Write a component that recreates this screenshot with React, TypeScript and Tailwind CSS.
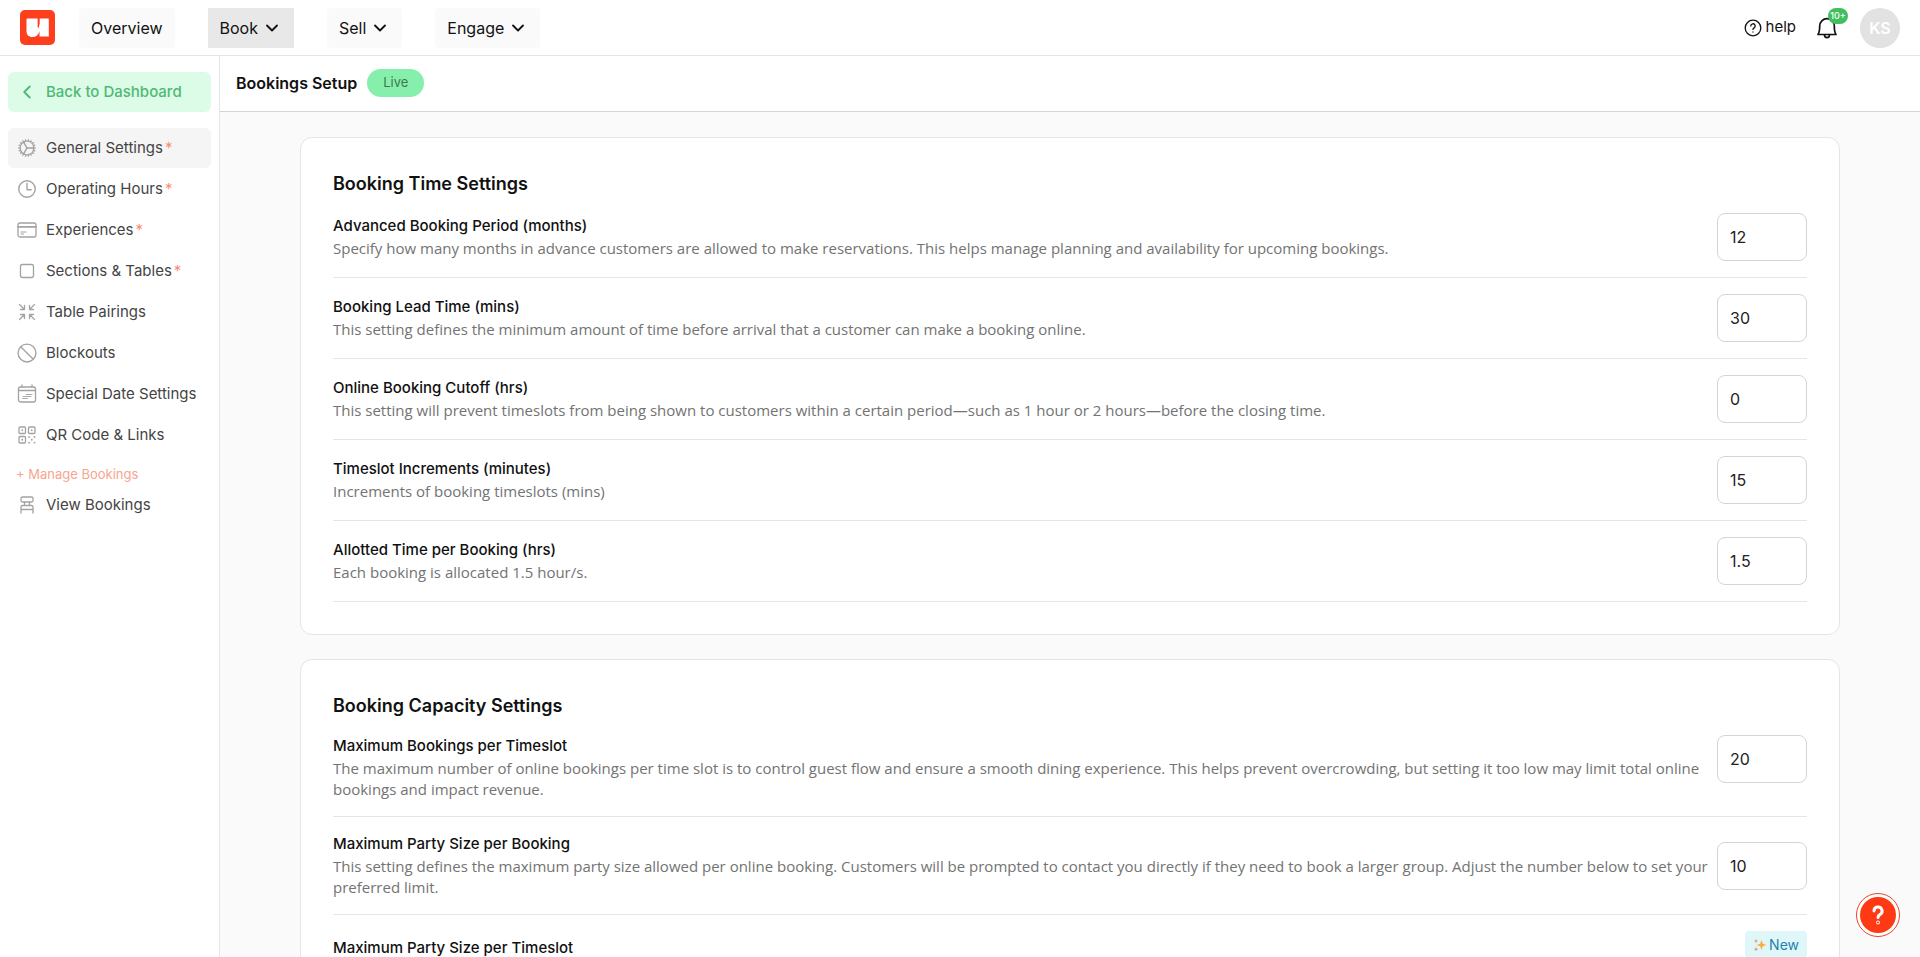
import { ReactNode } from "react";
import { IoCogOutline, IoTimeOutline, IoBanOutline } from "react-icons/io5";
import { ChevronDown, ChevronLeft } from "lucide-react";

const iconClass = "size-[22px] shrink-0 text-[#a3a3a3]";

function Stroke({ children }: { children: ReactNode }) {
  return (
    <svg viewBox="-1 -1 22 22" className={iconClass} fill="none" stroke="currentColor" strokeWidth="1.3" strokeLinecap="round" strokeLinejoin="round" aria-hidden="true">
      {children}
    </svg>
  );
}

type Item = { label: string; required?: boolean; active?: boolean; icon: ReactNode };

const items: Item[] = [
  { label: "General Settings", required: true, active: true, icon: <IoCogOutline className={iconClass} /> },
  { label: "Operating Hours", required: true, icon: <IoTimeOutline className={iconClass} /> },
  {
    label: "Experiences",
    required: true,
    icon: (
      <Stroke>
        <rect x="1" y="3" width="18" height="14" rx="2" />
        <path d="M1 6.800h18" strokeWidth="1.800" />
        <path d="M4 12h5M4 14h2.500" strokeWidth="1.200" />
      </Stroke>
    ),
  },
  { label: "Sections & Tables", required: true, icon: <Stroke><rect x="3.5" y="3.5" width="13" height="13" rx="2" /></Stroke> },
  {
    label: "Table Pairings",
    icon: (
      <Stroke>
        <path d="M2.5 2.5l5 5M7.5 3.5v4h-4M17.5 2.5l-5 5M12.5 3.5v4h4M2.5 17.5l5-5M3.5 12.5h4v4M17.5 17.5l-5-5M16.5 12.5h-4v4" />
      </Stroke>
    ),
  },
  { label: "Blockouts", icon: <IoBanOutline className={iconClass} /> },
  {
    label: "Special Date Settings",
    icon: (
      <Stroke>
        <rect x="1.5" y="3" width="17" height="15" rx="2" />
        <path d="M1.5 6.5h17M5 1v2M15 1v2" />
        <path d="M9 10.5h6M6 12.5h8M5.5 14.5h5" strokeWidth="0.9" />
      </Stroke>
    ),
  },
  {
    label: "QR Code & Links",
    icon: (
      <Stroke>
        <rect x="2" y="2" width="6.500" height="6.500" rx="1" />
        <rect x="11.500" y="2" width="6.500" height="6.500" rx="1" />
        <rect x="2" y="11.500" width="6.500" height="6.500" rx="1" />
        <path d="M5.250 5.250h.01M14.750 5.250h.01M5.250 14.750h.01M12 12h.01M17.500 12h.01M14.750 14.750h.01M12 17.700h.01M17.500 17.700h.01" strokeWidth="1.800" />
      </Stroke>
    ),
  },
];

function NavButton({ label, active = false, menu = true }: { label: string; active?: boolean; menu?: boolean }) {
  return (
    <button type="button" className={`flex h-10 items-center gap-1 px-3 text-base ${active ? "bg-[#e8e8e8]" : "rounded-sm bg-[#fafafa]"}`}>
      {label}
      {menu && <ChevronDown className="size-5" strokeWidth={2.2} aria-hidden="true" />}
    </button>
  );
}

function SideLink({ item }: { item: Item }) {
  return (
    <a href="#" className={`flex h-10 items-center gap-2 rounded-md px-2 text-[15px] text-[#444] ${item.active ? "bg-[#f5f5f5]" : ""}`}>
      {item.icon}
      <span className="flex gap-0.5 whitespace-nowrap">
        {item.label}
        {item.required && <span className="text-[#ff8a73]">*</span>}
      </span>
    </a>
  );
}

type Setting = { id: string; label: string; text: string; value: string; top?: boolean };

const timeSettings: Setting[] = [
  { id: "period", label: "Advanced Booking Period (months)", text: "Specify how many months in advance customers are allowed to make reservations. This helps manage planning and availability for upcoming bookings.", value: "12" },
  { id: "lead", label: "Booking Lead Time (mins)", text: "This setting defines the minimum amount of time before arrival that a customer can make a booking online.", value: "30" },
  { id: "cutoff", label: "Online Booking Cutoff (hrs)", text: "This setting will prevent timeslots from being shown to customers within a certain period—such as 1 hour or 2 hours—before the closing time.", value: "0" },
  { id: "increments", label: "Timeslot Increments (minutes)", text: "Increments of booking timeslots (mins)", value: "15" },
  { id: "allotted", label: "Allotted Time per Booking (hrs)", text: "Each booking is allocated 1.5 hour/s.", value: "1.5" },
];

const capacitySettings: Setting[] = [
  { id: "slot", label: "Maximum Bookings per Timeslot", text: "The maximum number of online bookings per time slot is to control guest flow and ensure a smooth dining experience. This helps prevent overcrowding, but setting it too low may limit total online bookings and impact revenue.", value: "20", top: true },
  { id: "party", label: "Maximum Party Size per Booking", text: "This setting defines the maximum party size allowed per online booking. Customers will be prompted to contact you directly if they need to book a larger group. Adjust the number below to set your preferred limit.", value: "10" },
];

function SettingRow({ s }: { s: Setting }) {
  return (
    <div className={`flex justify-between gap-2 border-b border-[#e5e5e5] pt-4 pb-4 first:pt-0 ${s.top ? "items-start" : "items-center"}`}>
      <div className="flex flex-col gap-0.5">
        <label htmlFor={s.id} className="text-[15px] leading-[21px] font-medium">{s.label}</label>
        <p className="font-['Open_Sans',sans-serif] text-[15px] leading-[21px] text-[#737373]">{s.text}</p>
      </div>
      <input id={s.id} defaultValue={s.value} className="h-12 w-[90px] shrink-0 rounded-lg border border-[#d4d4d4] bg-white px-3 text-base text-[#222]" />
    </div>
  );
}

function Card({ title, children }: { title: string; children: ReactNode }) {
  return (
    <section className="rounded-xl border border-[#e5e5e5] bg-white p-8">
      <h2 className="mb-4 text-lg leading-[27px] font-semibold">{title}</h2>
      <div>{children}</div>
    </section>
  );
}

export default function App() {
  return (
    <div className="flex h-screen flex-col overflow-hidden bg-white font-['Inter','Noto_Sans',sans-serif] text-[#111]">
      <header className="flex h-14 shrink-0 items-center justify-between border-b border-[#e5e5e5] px-5">
        <div className="flex items-center gap-6">
          <svg viewBox="0 0 35 35" className="size-[35px]" role="img" aria-label="Home">
            <rect width="35" height="35" rx="5" fill="#fd3f1d" />
            <path d="M6.500 9.500q0-1 1-1H17.600v8.500l.9 1.200 1.200-4.700V8.500h8.300q.8 0 .8 1V26.500H19.500v-5.500c-1.100 4-3.300 6-7 6-4 0-6-2.300-6-6z" fill="#fff" />
          </svg>
          <nav className="flex items-center gap-[33px]">
            <NavButton label="Overview" menu={false} />
            <NavButton label="Book" active />
            <NavButton label="Sell" />
            <NavButton label="Engage" />
          </nav>
        </div>
        <div className="flex items-center gap-5">
          <a href="#" className="flex items-center gap-1 text-[15px]">
            <svg viewBox="0 0 18 18" className="size-[18px]" fill="none" stroke="currentColor" strokeWidth="1.3" strokeLinecap="round" aria-hidden="true">
              <circle cx="9" cy="9" r="7.800" />
              <path d="M6.800 7a2.200 2.200 0 1 1 3.300 1.900c-.7.400-1.100.8-1.100 1.500M9 12.900v.1" />
            </svg>
            help
          </a>
          <button type="button" aria-label="Notifications" className="relative mr-0.5">
            <svg viewBox="0 0 22 24" className="h-6 w-[22px]" fill="none" stroke="currentColor" strokeWidth="1.700" strokeLinecap="round" strokeLinejoin="round" aria-hidden="true">
              <path d="M2 18.500h18c-1.500-2.200-1.700-3-1.700-8.500a7.300 7.300 0 0 0-14.600 0c0 5.500-.2 6.300-1.700 8.500zM8.500 19c0 3.500 5 3.500 5 0" />
            </svg>
            <span className="absolute -top-2 left-3 flex h-4 w-5 items-center justify-center rounded-full bg-[#3fbf5f] text-[9px] font-medium text-white">10+</span>
          </button>
          <button type="button" className="size-10 rounded-full bg-[#e2e2e2] text-base font-semibold text-white">KS</button>
        </div>
      </header>
      <div className="flex min-h-0 flex-1">
        <aside className="w-[220px] shrink-0 border-r border-[#e5e5e5] px-2 pt-4">
          <a href="#" className="mb-4 flex h-10 items-center gap-2 rounded-md bg-[#dcfce7] px-2 text-[15px] font-medium text-[#4fb974]">
            <ChevronLeft className="size-[22px]" aria-hidden="true" />
            Back to Dashboard
          </a>
          <nav className="flex flex-col gap-px">
            {items.map((item) => <SideLink key={item.label} item={item} />)}
          </nav>
          <p className="px-2 pt-2 text-[13px] leading-[22px] text-[#f9a48f]">+ Manage Bookings</p>
          <SideLink
            item={{
              label: "View Bookings",
              icon: (
                <Stroke>
                  <rect x="4" y="2" width="12" height="5" rx="1.500" />
                  <path d="M7.500 7v3.500M12.500 7v3.500M4 18v-6q0-1.500 1.500-1.500h9q1.500 0 1.500 1.500v6M4 14.500h12" />
                </Stroke>
              ),
            }}
          />
        </aside>
        <div className="flex min-w-0 flex-1 flex-col">
          <div className="flex h-14 shrink-0 items-center gap-2.5 border-b border-[#d4d4d4] px-4 pb-0.5">
            <h1 className="text-base font-semibold">Bookings Setup</h1>
            <span className="flex h-7 items-center rounded-full bg-[#86efac] px-4 text-[13px] text-[#3c7a52]">Live</span>
          </div>
          <main className="flex flex-1 flex-col gap-6 overflow-y-auto bg-[#fafafa] px-20 pt-[25px] [scrollbar-width:none]">
            <Card title="Booking Time Settings">
              {timeSettings.map((s) => <SettingRow key={s.id} s={s} />)}
            </Card>
            <Card title="Booking Capacity Settings">
              {capacitySettings.map((s) => <SettingRow key={s.id} s={s} />)}
              <div className="flex items-start justify-between pt-4">
                <h3 className="pt-1.5 text-[15px] leading-[21px] font-medium">Maximum Party Size per Timeslot</h3>
                <span className="flex h-7 items-center gap-0.5 rounded bg-[#e0f7fa] px-2 text-sm text-[#2583a8]">
                  <svg viewBox="0 0 14 14" className="size-[14px]" aria-hidden="true">
                    <path d="M8.500 2l1.300 3.700L13.500 7 9.800 8.300 8.500 12 7.200 8.300 3.500 7l3.700-1.300z" fill="#f6b042" />
                    <path d="M3 .8l.6 1.600 1.600.6-1.600.6L3 5.200l-.6-1.600L.8 3l1.600-.6zM3 9l.6 1.600 1.600.6-1.600.6L3 13.400l-.6-1.600-1.600-.6 1.600-.6z" fill="#f08a4b" />
                  </svg>
                  New
                </span>
              </div>
            </Card>
          </main>
        </div>
      </div>
      <button type="button" aria-label="Support" className="fixed right-5 bottom-5 flex size-11 items-center justify-center rounded-full border border-[#e8442a] bg-white">
        <span className="flex size-9 items-center justify-center rounded-full bg-[#fd3a14]">
          <svg viewBox="0 0 12 20" className="h-5 w-3" fill="none" stroke="#fff" strokeWidth="3" strokeLinecap="round" strokeLinejoin="round" aria-hidden="true">
            <path d="M2 6a4 4 0 1 1 5.800 3.600c-1.300.7-1.800 1.400-1.800 3" />
            <circle cx="6" cy="17.500" r="0.400" />
          </svg>
        </span>
      </button>
    </div>
  );
}
